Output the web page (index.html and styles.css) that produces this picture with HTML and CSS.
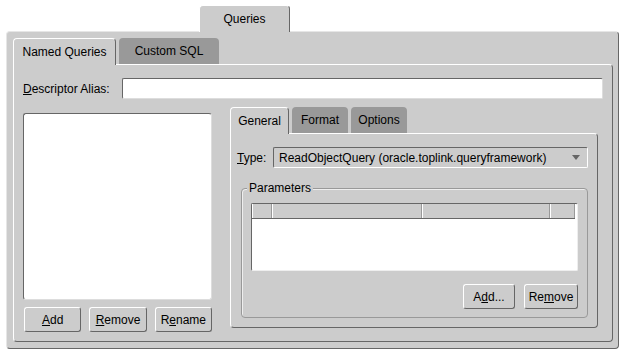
FILE: index.html
```html
<!DOCTYPE html>
<html lang="en">
<head>
    <meta charset="UTF-8">
    <title>Queries</title>
    <link rel="stylesheet" href="styles.css">
</head>
<body>
    <div class="window">
        <div class="tabs top-tabs">
            <div class="tab active queries-tab">Queries</div>
        </div>
        <div class="panel outer">
            <div class="tabs">
                <div class="tab active named-tab">Named Queries</div>
                <div class="tab sql-tab">Custom SQL</div>
            </div>
            <div class="panel named">
                <div class="alias-row">
                    <label class="alias-label"><u>D</u>escriptor Alias:</label>
                    <div class="field"></div>
                </div>
                <div class="columns">
                    <div class="left-col">
                        <div class="list"></div>
                        <div class="btn-row">
                            <button class="btn"><u>A</u>dd</button>
                            <button class="btn"><u>R</u>emove</button>
                            <button class="btn">R<u>e</u>name</button>
                        </div>
                    </div>
                    <div class="right-col">
                        <div class="tabs">
                            <div class="tab active general-tab">General</div>
                            <div class="tab small-tab">Format</div>
                            <div class="tab small-tab">Options</div>
                        </div>
                        <div class="panel general">
                            <div class="type-row">
                                <label class="type-label"><u>T</u>ype:</label>
                                <div class="combo">
                                    <span>ReadObjectQuery (oracle.toplink.queryframework)</span>
                                    <span class="arrow"></span>
                                </div>
                            </div>
                            <div class="group">
                                <span class="legend">Parameters</span>
                                <div class="table">
                                    <div class="thead">
                                        <span class="th th-1"></span>
                                        <span class="th th-2"></span>
                                        <span class="th th-3"></span>
                                        <span class="th th-4"></span>
                                    </div>
                                </div>
                                <div class="btn-row right">
                                    <button class="btn add-btn">A<u>d</u>d...</button>
                                    <button class="btn remove-btn">Re<u>m</u>ove</button>
                                </div>
                            </div>
                        </div>
                    </div>
                </div>
            </div>
        </div>
    </div>
</body>
</html>
```

FILE: styles.css
```css
* {
    box-sizing: border-box;
}

body {
    margin: 0;
    background: #fff;
    font-family: 'Liberation Sans', Arial, sans-serif;
    font-size: 12px;
    color: #000;
}

u {
    text-decoration: underline;
    text-underline-offset: 1px;
}

.window {
    padding: 5px 2px 0 6px;
}

.tabs {
    display: flex;
    gap: 3px;
    height: 26px;
}

.top-tabs {
    padding-left: 193px;
}

.tab {
    display: flex;
    align-items: center;
    justify-content: center;
    background: #999;
    border-radius: 4px 4px 0 0;
    height: 26px;
    position: relative;
    z-index: 1;
}

.tab.active {
    background: #ccc;
    border-top: 1px solid #fff;
    border-left: 1px solid #fff;
    border-right: 1px solid #666;
    height: 27px;
    padding-bottom: 1px;
}

.queries-tab {
    width: 91px;
    border-top-color: #e6e6e6;
    border-left-color: #e6e6e6;
}

.named-tab {
    width: 103px;
}

.sql-tab {
    width: 100px;
}

.general-tab {
    width: 59px;
}

.small-tab {
    width: 56px;
}

.panel {
    background: #ccc;
    border: 1px solid #fff;
    border-right-color: #666;
    border-bottom-color: #666;
    border-radius: 0 4px 4px 4px;
}

.outer {
    height: 318px;
    padding: 6px 5px 6px 6px;
    display: flex;
    flex-direction: column;
    border-top-color: #e6e6e6;
    border-left-color: #e6e6e6;
    border-radius: 4px 4px 4px 4px;
}

.named {
    flex: 1;
    padding: 13px 9px 0 9px;
}

.alias-row {
    display: flex;
    align-items: center;
    height: 21px;
}

.alias-label {
    width: 99px;
}

.field {
    flex: 1;
    height: 21px;
    background: #fff;
    border: 1px solid #666;
    border-right-color: #ddd;
    border-bottom-color: #ddd;
    border-radius: 2px;
}

.columns {
    display: flex;
    gap: 18px;
    margin-top: 8px;
    margin-right: 5px;
}

.left-col {
    width: 189px;
    flex-shrink: 0;
    padding-top: 6px;
}

.list {
    height: 187px;
    background: #fff;
    border: 1px solid #666;
    border-right-color: #ddd;
    border-bottom-color: #ddd;
    border-radius: 3px;
}

.btn-row {
    display: flex;
    gap: 7px;
    margin-top: 7px;
}

.btn {
    width: 58px;
    height: 25px;
    padding: 0;
    background: #ccc;
    border: 1px solid #fff;
    border-right-color: #666;
    border-bottom-color: #666;
    border-radius: 3px;
    font-family: inherit;
    font-size: 12px;
    color: #000;
    margin-left: 1px;
}

.right-col {
    flex: 1;
}

.general {
    height: 195px;
    padding: 13px 9px 0 6px;
}

.type-row {
    display: flex;
    align-items: center;
    height: 21px;
}

.type-label {
    width: 36px;
}

.combo {
    flex: 1;
    height: 21px;
    display: flex;
    align-items: center;
    justify-content: space-between;
    padding: 0 7px 0 5px;
    background: #ccc;
    border: 1px solid #666;
    border-right-color: #fff;
    border-bottom-color: #fff;
    border-radius: 2px;
}

.arrow {
    width: 0;
    height: 0;
    border-left: 4px solid transparent;
    border-right: 4px solid transparent;
    border-top: 5px solid #666;
}

.group {
    position: relative;
    height: 130px;
    margin: 20px 0 0 4px;
    padding: 14px 9px 0 9px;
    border: 1px solid #999;
    border-radius: 4px;
    box-shadow: inset 1px 1px 0 #eee;
}

.legend {
    position: absolute;
    top: -8px;
    left: 5px;
    padding: 0 2px;
    background: #ccc;
}

.table {
    height: 68px;
    background: #fff;
    border: 1px solid #666;
    border-right-color: #eee;
    border-bottom-color: #eee;
    border-radius: 2px;
}

.thead {
    display: flex;
    height: 15px;
    border-bottom: 1px solid #666;
    width: 323px;
}

.th {
    height: 14px;
    background: #ccc;
    border-left: 1px solid #fff;
    border-right: 1px solid #999;
}

.th-1 {
    width: 20px;
}

.th-2 {
    width: 150px;
}

.th-3 {
    width: 128px;
}

.th-4 {
    width: 25px;
}

.btn-row.right {
    justify-content: flex-end;
    gap: 8px;
    margin-top: 13px;
}

.add-btn {
    width: 52px;
}

.remove-btn {
    width: 54px;
}
```
